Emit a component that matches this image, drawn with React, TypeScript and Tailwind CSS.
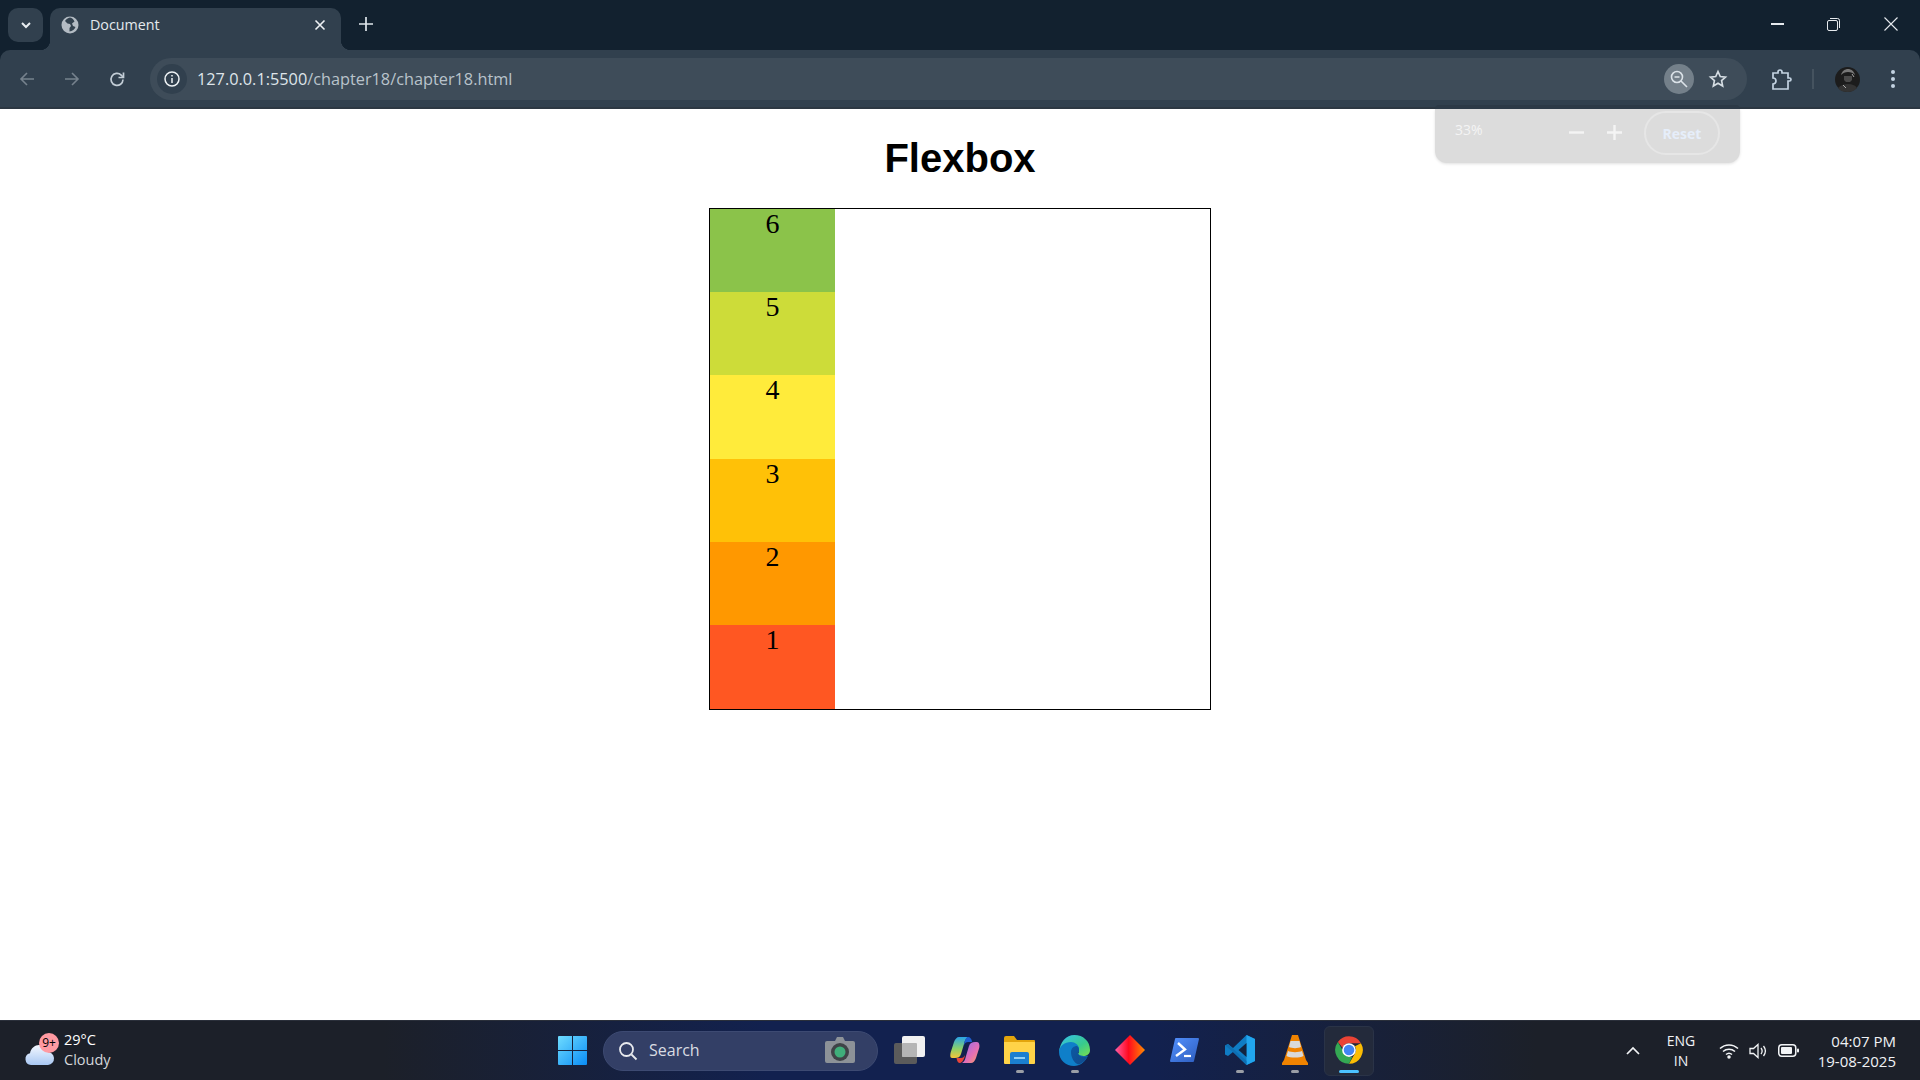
import React from 'react';

const UI = "font-['Open_Sans','Noto_Sans',sans-serif]";

const boxes = [
  { n: 6, c: 'bg-[#8bc34a]' },
  { n: 5, c: 'bg-[#cddc39]' },
  { n: 4, c: 'bg-[#ffeb3b]' },
  { n: 3, c: 'bg-[#ffc107]' },
  { n: 2, c: 'bg-[#ff9800]' },
  { n: 1, c: 'bg-[#ff5722]' },
];

const Globe = () => (
  <svg width="18" height="18" viewBox="0 0 18 18">
    <circle cx="9" cy="9" r="8.5" fill="#b4bcc4" />
    <path d="M9 1.5c-2 .5-4 1.5-5 3.500l2.500 2.500 2.500.5 1 2-1.500 2v3.500c3-.5 5-2 6-4.500l-2.500-1-1-2.500 2.500-2C12.500 3 11 2 9 1.500z" fill="#33424f" />
  </svg>
);

const Arrow = ({ flip, color }: { flip?: boolean; color: string }) => (
  <svg width="18" height="18" viewBox="0 0 18 18" fill="none" stroke={color} strokeWidth="1.6" className={flip ? 'rotate-180' : ''}>
    <path d="M16 9H3M9 3 3 9l6 6" />
  </svg>
);

const WindowsLogo = () => (
  <svg width="29" height="29" viewBox="0 0 29 29">
    <defs>
      <linearGradient id="win" x1="0" y1="0" x2="1" y2="1">
        <stop offset="0" stopColor="#6fdcff" />
        <stop offset="1" stopColor="#0a8cf5" />
      </linearGradient>
    </defs>
    <path d="M0 1a1 1 0 0 1 1-1h13v14H0zM15 0h13a1 1 0 0 1 1 1v13H15zM0 15h14v14H1a1 1 0 0 1-1-1zM15 15h14v13a1 1 0 0 1-1 1H15z" fill="url(#win)" />
  </svg>
);

const TaskView = () => (
  <svg width="32" height="30" viewBox="0 0 32 30">
    <rect x="0" y="8" width="23" height="21" rx="2" fill="#5b5b5b" />
    <rect x="8" y="1" width="23" height="21" rx="2" fill="#f1f1f1" />
    <rect x="8" y="8" width="15" height="14" rx="1" fill="#b5b5b5" />
  </svg>
);

const Copilot = () => (
  <svg width="30" height="28" viewBox="0 0 30 28">
    <defs>
      <linearGradient id="cpa" x1="0" y1="0" x2="0" y2="1">
        <stop offset="0" stopColor="#2aa4e8" />
        <stop offset=".55" stopColor="#8ad06a" />
        <stop offset="1" stopColor="#f5c63a" />
      </linearGradient>
      <linearGradient id="cpb" x1="0" y1="0" x2="1" y2="1">
        <stop offset="0" stopColor="#8a6cf0" />
        <stop offset=".6" stopColor="#e56fb4" />
        <stop offset="1" stopColor="#f7a35c" />
      </linearGradient>
    </defs>
    <path d="M9 1h9c-2 1-3 3-4 7l-3 10c-1 3-3 4-6 4H2C0 22 0 19 .8 16L4 6c1-3 3-5 5-5z" fill="url(#cpa)" />
    <path d="M21 27h-9c2-1 3-3 4-7l3-10c1-3 3-4 6-4h2c2 0 3 3 2.200 6L26 22c-1 3-3 5-5 5z" fill="url(#cpb)" />
    <path d="M18 1c2 0 4 2 4 5h-4c-2 0-3 1-4 3 .5-4 2-8 4-8z" fill="#1d5fd1" />
    <path d="M10 27c-2 0-3-2-3.500-5H11c2 0 3-1 4-3-.5 4-3 8-5 8z" fill="#e8443a" />
  </svg>
);

const Folder = () => (
  <svg width="31" height="28" viewBox="0 0 31 28">
    <path d="M0 2a2 2 0 0 1 2-2h8l3 4h17a1 1 0 0 1 1 1v4H0z" fill="#e3a50c" />
    <path d="M0 6h30a1 1 0 0 1 1 1v20a1 1 0 0 1-1 1H1a1 1 0 0 1-1-1z" fill="#ffd348" />
    <path d="M6 28V18a2 2 0 0 1 2-2h15a2 2 0 0 1 2 2v10z" fill="#1b7fcf" />
    <rect x="10" y="21" width="11" height="2" fill="#8fd0f5" />
  </svg>
);

const Edge = () => (
  <svg width="31" height="31" viewBox="0 0 31 31">
    <defs>
      <linearGradient id="edA" x1="0" y1="0" x2="1" y2="1">
        <stop offset="0" stopColor="#35c1f1" />
        <stop offset=".6" stopColor="#38c98c" />
        <stop offset="1" stopColor="#7be04f" />
      </linearGradient>
      <linearGradient id="edB" x1="0" y1="0" x2="1" y2="1">
        <stop offset="0" stopColor="#0c59a4" />
        <stop offset="1" stopColor="#114a8b" />
      </linearGradient>
    </defs>
    <path d="M15.500 0C24 0 31 6 31 15c0 4-3 6-7 6-3 0-5-1-5-2 0-.5 1-1 1-3 0-4-3-7-7-7-6 0-10 4-13 8C1 7 7 0 15.500 0z" fill="url(#edA)" />
    <path d="M0 17c0-6 6-10 12-10 4 0 8 3 8 7 0 2-1 3-1 4 1 3 5 3 7 3 1 0 2 0 3-.5C26 27 21 31 15 31 7 31 0 25 0 17z" fill="#0f7fc9" />
    <path d="M12 17c0-4 3-6 6-6 2 1 2 3 2 5-.5 1-1 1.500-1 2.500 1 3 5 3 7 3 1 0 2 0 3-.5-2 4-5 7-9 8.500-5-1-8-7-8-12.500z" fill="url(#edB)" />
  </svg>
);

const Diamond = () => (
  <svg width="30" height="30" viewBox="0 0 30 30">
    <defs>
      <linearGradient id="dia" x1="0" y1="0" x2="1" y2="0">
        <stop offset="0" stopColor="#ff5fa8" />
        <stop offset=".45" stopColor="#ff0a1e" />
        <stop offset="1" stopColor="#ff8a00" />
      </linearGradient>
    </defs>
    <path d="M15 0 30 15 15 30 0 15z" fill="url(#dia)" />
  </svg>
);

const PowerShell = () => (
  <svg width="29" height="24" viewBox="0 0 29 24">
    <defs>
      <linearGradient id="ps" x1="0" y1="0" x2="1" y2="1">
        <stop offset="0" stopColor="#5391fe" />
        <stop offset="1" stopColor="#2d5dbe" />
      </linearGradient>
    </defs>
    <path d="M6 0h22a1 1 0 0 1 1 1l-5 22a1 1 0 0 1-1 1H1a1 1 0 0 1-1-1L5 1a1 1 0 0 1 1-1z" fill="url(#ps)" />
    <path d="m8 5 7 6.500L6 18" fill="none" stroke="#fff" strokeWidth="2.400" />
    <path d="M14 18h7" stroke="#fff" strokeWidth="2.200" />
  </svg>
);

const VSCode = () => (
  <svg width="30" height="30" viewBox="0 0 30 30">
    <path d="M21.500 0 30 4v22l-8.500 4L8 17l-5 4-3-1.500v-9L3 9l5 4z" fill="#0f7cc4" />
    <path d="M21.500 0 30 4v22l-8.500 4z" fill="#21a5ee" />
    <path d="M21.500 8 13.500 15l8 7z" fill="#12233f" />
    <path d="M0 10.500 3 9l18.500 17v4l-13.500-13z" fill="#0e6fb3" />
  </svg>
);

const Vlc = () => (
  <svg width="26" height="30" viewBox="0 0 26 30">
    <path d="M10 0h6l8 25 2 3v2H0v-2l2-3z" fill="#f08300" />
    <path d="M8.500 6h9l1.500 6c-3 1.500-9 1.500-12 0zM6 16c3 1.500 11 1.500 14 0l1.500 5c-4 2-13 2-17 0z" fill="#d9d9d9" />
  </svg>
);

const Chrome = () => (
  <svg width="30" height="30" viewBox="0 0 48 48">
    <path d="M24 2a22 22 0 0 1 19.100 11H24a11 11 0 0 0-10.300 7.200L6.200 11A22 22 0 0 1 24 2z" fill="#ea4335" />
    <path d="M43.100 13A22 22 0 0 1 24 46l9.500-16.500A11 11 0 0 0 33.500 18z" fill="#fbbc04" />
    <path d="M24 46A22 22 0 0 1 6.200 11l9.500 16.500A11 11 0 0 0 24 35l5 0z" fill="#34a853" />
    <circle cx="24" cy="24" r="11" fill="#fff" />
    <circle cx="24" cy="24" r="8.500" fill="#4285f4" />
  </svg>
);

const Cloud = () => (
  <svg width="30" height="26" viewBox="0 0 30 26">
    <defs>
      <linearGradient id="cl" x1="0" y1="0" x2="0" y2="1">
        <stop offset="0" stopColor="#f4f8ff" />
        <stop offset="1" stopColor="#a9c8f3" />
      </linearGradient>
    </defs>
    <path d="M6 25a6 6 0 0 1-1-11.800C6 8 10 5 14 5c4 0 7 3 8 7a6.500 6.500 0 0 1 1 13z" fill="url(#cl)" />
  </svg>
);

const Camera = () => (
  <svg width="30" height="28" viewBox="0 0 30 28">
    <path d="M10 4l2-4h6l2 4h8a2 2 0 0 1 2 2v18a2 2 0 0 1-2 2H2a2 2 0 0 1-2-2V6a2 2 0 0 1 2-2z" fill="#8d9298" />
    <circle cx="15" cy="15" r="9" fill="#3f4347" />
    <circle cx="15" cy="15" r="5.500" fill="#3fae7a" />
  </svg>
);

const Avatar = () => (
  <svg width="25" height="25" viewBox="0 0 25 25">
    <circle cx="12.500" cy="12.500" r="12.500" fill="#1c1c1c" />
    <path d="M6 8c1-4 4-6 7-6s6 2 7 6c-2-2-4-3-7-3S8 6 6 8z" fill="#777" />
    <path d="M9 9h8v4l-2 2h-4l-2-2z" fill="#4a4a4a" />
    <path d="M3 21c3-3 6-4 10-4s7 1 9 4c-3 3-6 4-9.500 4S5 24 3 21z" fill="#333" />
    <path d="M17 7l2 3M8 18l3 3" stroke="#aaa" strokeWidth="1" />
  </svg>
);

const Running = ({ active }: { active?: boolean }) => (
  <span className={active ? 'absolute bottom-[2px] left-1/2 h-[3px] w-5 -translate-x-1/2 rounded-full bg-[#4cc2ff]' : 'absolute bottom-[3px] left-1/2 h-[3px] w-2 -translate-x-1/2 rounded-full bg-[#9a9ea6]'} />
);

const taskIcons = [
  { el: <TaskView /> },
  { el: <Copilot /> },
  { el: <Folder />, running: true },
  { el: <Edge />, running: true },
  { el: <Diamond /> },
  { el: <PowerShell /> },
  { el: <VSCode />, running: true },
  { el: <Vlc />, running: true },
];

export default function App() {
  return (
    <div className={`flex h-screen w-full flex-col overflow-hidden bg-white ${UI}`}>
      {/* title strip */}
      <div className="flex h-[50px] shrink-0 bg-[#12212f]">
        <div className="ml-2 mt-2 flex h-[34px] w-[35px] items-center justify-center rounded-[10px] bg-[#31404e]">
          <svg width="14" height="14" viewBox="0 0 14 14" fill="none" stroke="#e8edf1" strokeWidth="2">
            <path d="m3 5 4 4 4-4" />
          </svg>
        </div>
        <div className="relative ml-[7px] mt-2 flex w-[291px] items-center rounded-t-[10px] bg-[#31404e] pb-[8px] pl-[11px] pr-[14px]">
          <span className="absolute -left-[10px] bottom-0 h-[10px] w-[10px] bg-[radial-gradient(circle_at_0_0,#12212f_10px,#31404e_10.500px)]" />
          <span className="absolute -right-[10px] bottom-0 h-[10px] w-[10px] bg-[radial-gradient(circle_at_100%_0,#12212f_10px,#31404e_10.500px)]" />
          <Globe />
          <span className="ml-[11px] flex-1 text-[14.300px] text-[#e4e9ed]">Document</span>
          <svg width="14" height="14" viewBox="0 0 14 14" stroke="#eef1f4" strokeWidth="1.600">
            <path d="m2.500 2.500 9 9M11.500 2.500l-9 9" />
          </svg>
        </div>
        <div className="ml-[18px] mt-[17px] h-4">
          <svg width="14" height="14" viewBox="0 0 14 14" stroke="#dfe6ec" strokeWidth="1.700">
            <path d="M7 0v14M0 7h14" />
          </svg>
        </div>
        <div className="ml-auto flex items-start pt-[17px]">
          <div className="mr-[43px] mt-[6px] h-[1.500px] w-[13px] bg-[#e6eaee]" />
          <svg className="mr-[44px] mt-[1px]" width="13" height="13" viewBox="0 0 13 13" fill="none" stroke="#e6eaee" strokeWidth="1">
            <rect x=".5" y="2.500" width="10" height="10" rx="1.500" />
            <path d="M3 .5h7.500a2 2 0 0 1 2 2V10" />
          </svg>
          <svg className="mr-[22px]" width="14" height="14" viewBox="0 0 14 14" stroke="#e6eaee" strokeWidth="1.100">
            <path d="m.5.5 13 13M13.500.5l-13 13" />
          </svg>
        </div>
      </div>

      {/* toolbar */}
      <div className="shrink-0 bg-[#12212f]">
        <div className="flex h-[59px] items-start rounded-t-[10px] border-b-2 border-[#2c3742] bg-[#31404e] pt-2">
          <div className="flex h-[42px] items-center pl-[18px]">
            <Arrow color="#76828d" />
            <div className="ml-[27px]">
              <Arrow flip color="#76828d" />
            </div>
            <svg className="ml-[27px]" width="18" height="18" viewBox="0 0 18 18" fill="none" stroke="#c3cdd6" strokeWidth="1.700">
              <path d="M15 9.500a6 6 0 1 1-1.800-4.400L15 7" />
              <path d="M15.500 2.500v5h-5" />
            </svg>
          </div>
          <div className="ml-[24px] flex h-[42px] w-[1597px] items-center rounded-full bg-[#3e4c59] pl-[7px] pr-[19px]">
            <div className="flex h-[30px] w-[30px] items-center justify-center rounded-full bg-[#31404e]">
              <svg width="16" height="16" viewBox="0 0 16 16" fill="none" stroke="#eef2f5" strokeWidth="1.500">
                <circle cx="8" cy="8" r="7" />
                <path d="M8 7v5M8 4v1.600" />
              </svg>
            </div>
            <span className="ml-[10px] mt-[1px] flex-1 text-[16.300px] text-[#dfe5ea]">
              127.0.0.1:5500<span className="text-[#b9c3cb]">/chapter18/chapter18.html</span>
            </span>
            <div className="flex h-[30px] w-[30px] items-center justify-center rounded-full bg-[#74808a]">
              <svg width="20" height="20" viewBox="0 0 20 20" fill="none" stroke="#dbe2e8" strokeWidth="1.600">
                <circle cx="8" cy="8" r="5.500" />
                <path d="M5.500 8h5M12 12l6 6" />
              </svg>
            </div>
            <svg className="ml-[14px]" width="20" height="20" viewBox="0 0 24 24" fill="none" stroke="#d5dde3" strokeWidth="2">
              <path d="m12 3 2.700 6 6.300.7-4.700 4.300 1.300 6.500L12 17.200 6.400 20.500 7.700 14 3 9.700 9.300 9z" />
            </svg>
          </div>
          <div className="flex h-[42px] items-center pl-[25px]">
            <svg width="20" height="21" viewBox="0 0 20 21" fill="none" stroke="#c3d3e2" strokeWidth="1.700">
              <path d="M1 4h5V3a2 2 0 0 1 4 0v1h6v5h1.500a1.500 1.500 0 0 1 0 3H16v8H1v-5a2.500 2.500 0 0 0 0-6z" />
            </svg>
            <div className="ml-[20px] h-5 w-[2px] bg-[#45535f]" />
            <div className="ml-[21px] h-[25px] w-[25px]">
              <Avatar />
            </div>
            <div className="ml-[31px] flex flex-col gap-[3px]">
              <span className="h-1 w-1 rounded-full bg-[#c3d3e2]" />
              <span className="h-1 w-1 rounded-full bg-[#c3d3e2]" />
              <span className="h-1 w-1 rounded-full bg-[#c3d3e2]" />
            </div>
          </div>
        </div>
      </div>

      {/* page */}
      <div className="relative min-h-0 flex-1 bg-white">
        <div className="absolute left-[1435px] top-0 flex h-[54px] w-[305px] items-start rounded-b-[12px] bg-[#dcdcdc] pt-[2px] shadow-[0_1px_3px_rgba(0,0,0,0.12)]">
          <span className="absolute -top-[4px] left-0 h-[4px] w-full rounded-t-[6px] bg-[#2c3946]" />
          <span className="ml-5 mt-[10px] w-[114px] text-[14px] leading-[18px] text-[#f4f4f4]">33%</span>
          <svg className="mt-[14px]" width="15" height="15" viewBox="0 0 15 15" stroke="#f4f4f4" strokeWidth="2.400">
            <path d="M0 7.500h15" />
          </svg>
          <svg className="ml-[23px] mt-[14px]" width="15" height="15" viewBox="0 0 15 15" stroke="#f4f4f4" strokeWidth="2.400">
            <path d="M0 7.500h15M7.500 0v15" />
          </svg>
          <div className="ml-[22px] flex h-[44px] w-[76px] items-center justify-center rounded-full border-2 border-[#e6e6e6] text-[14px] font-bold text-[#e6eefa]">
            Reset
          </div>
        </div>

        <h1 className="mt-[26px] text-center font-['Liberation_Sans',Arial,sans-serif] text-[40px] font-bold leading-[46px] text-black">
          Flexbox
        </h1>
        <div className="mx-auto mt-[26.700px] flex h-[502px] w-[502px] flex-col border border-black">
          {boxes.map((b) => (
            <div key={b.n} className={`h-[83.333px] w-[125px] text-center font-['Liberation_Serif','Times_New_Roman',serif] text-[28px] leading-[30px] text-black ${b.c}`}>
              {b.n}
            </div>
          ))}
        </div>
      </div>

      {/* taskbar */}
      <div className="flex h-[60px] shrink-0 items-center border-t border-[#2a2f3a] bg-[linear-gradient(90deg,#1c2029_0%,#1c2029_20%,#12214f_40%,#12214f_60%,#1c2029_80%,#1c2029_100%)]">
        <div className="flex w-[558px] shrink-0 items-center pl-[25px]">
          <div className="relative h-[30px] w-[30px]">
            <div className="absolute bottom-0 left-0">
              <Cloud />
            </div>
            <span className="absolute -top-[3px] left-[14px] flex h-[20px] w-[20px] items-center justify-center rounded-full bg-[#ff9aa2] text-[12px] text-black">
              9+
            </span>
          </div>
          <div className="mb-[2px] ml-[9px] text-[14.500px] leading-[20px]">
            <div className="font-medium text-white">29°C</div>
            <div className="text-[#d4d7dc]">Cloudy</div>
          </div>
        </div>
        <WindowsLogo />
        <div className="ml-[16px] flex h-[40px] w-[275px] items-center rounded-full border border-[#3d4a72] bg-[#333f66] pl-[14px] pr-[22px]">
          <svg width="20" height="20" viewBox="0 0 20 20" fill="none" stroke="#e8eaee" strokeWidth="1.800">
            <circle cx="8.500" cy="8.500" r="6.500" />
            <path d="m13.500 13.500 5 5" />
          </svg>
          <span className="mb-[1px] ml-[11px] flex-1 text-[16px] text-[#d9dce2]">Search</span>
          <Camera />
        </div>
        <div className="ml-[4px] flex items-center">
          {taskIcons.map((t, i) => (
            <div key={i} className="relative flex h-[50px] w-[55px] items-center justify-center pb-[1px]">
              {t.el}
              {t.running && <Running />}
            </div>
          ))}
          <div className="relative ml-[2px] flex h-[50px] w-[50px] items-center justify-center rounded-md border border-[#2a3347] bg-[#232a3b] pb-[1px]">
            <Chrome />
            <Running active />
          </div>
        </div>
        <div className="ml-auto flex items-center pr-[24px] text-[14px] text-[#f0f2f5]">
          <svg width="14" height="10" viewBox="0 0 14 10" fill="none" stroke="#f2f4f6" strokeWidth="1.700">
            <path d="m1 8 6-6 6 6" />
          </svg>
          <div className="ml-[18px] w-[46px] text-center leading-[20px]">
            <div>ENG</div>
            <div>IN</div>
          </div>
          <svg className="ml-[15px]" width="20" height="16" viewBox="0 0 20 16" fill="none" stroke="#f2f4f6" strokeWidth="1.500">
            <path d="M1 5.500a13 13 0 0 1 18 0M4 8.500a9 9 0 0 1 12 0M7 11.500a4.500 4.500 0 0 1 6 0" />
            <circle cx="10" cy="14" r="1" fill="#f2f4f6" />
          </svg>
          <svg className="ml-[10px]" width="20" height="16" viewBox="0 0 20 16" fill="none" stroke="#f2f4f6" strokeWidth="1.300">
            <path d="M1 5.500h3.500L9 1.500v13l-4.500-4H1zM12 5c1.300 1.700 1.300 4.300 0 6M14.500 3c2.300 3 2.300 7 0 10" />
          </svg>
          <svg className="ml-[9px]" width="21" height="13" viewBox="0 0 21 13" fill="none">
            <rect x=".75" y=".75" width="17" height="11.500" rx="3" stroke="#f2f4f6" strokeWidth="1.500" />
            <rect x="3" y="3" width="11" height="7" rx="1" fill="#f2f4f6" />
            <rect x="19" y="4.500" width="2" height="4" rx="1" fill="#f2f4f6" />
          </svg>
          <div className="ml-[17px] w-[80px] whitespace-nowrap text-right text-[15px] leading-[20px]">
            <div>04:07 PM</div>
            <div>19-08-2025</div>
          </div>
        </div>
      </div>
    </div>
  );
}
